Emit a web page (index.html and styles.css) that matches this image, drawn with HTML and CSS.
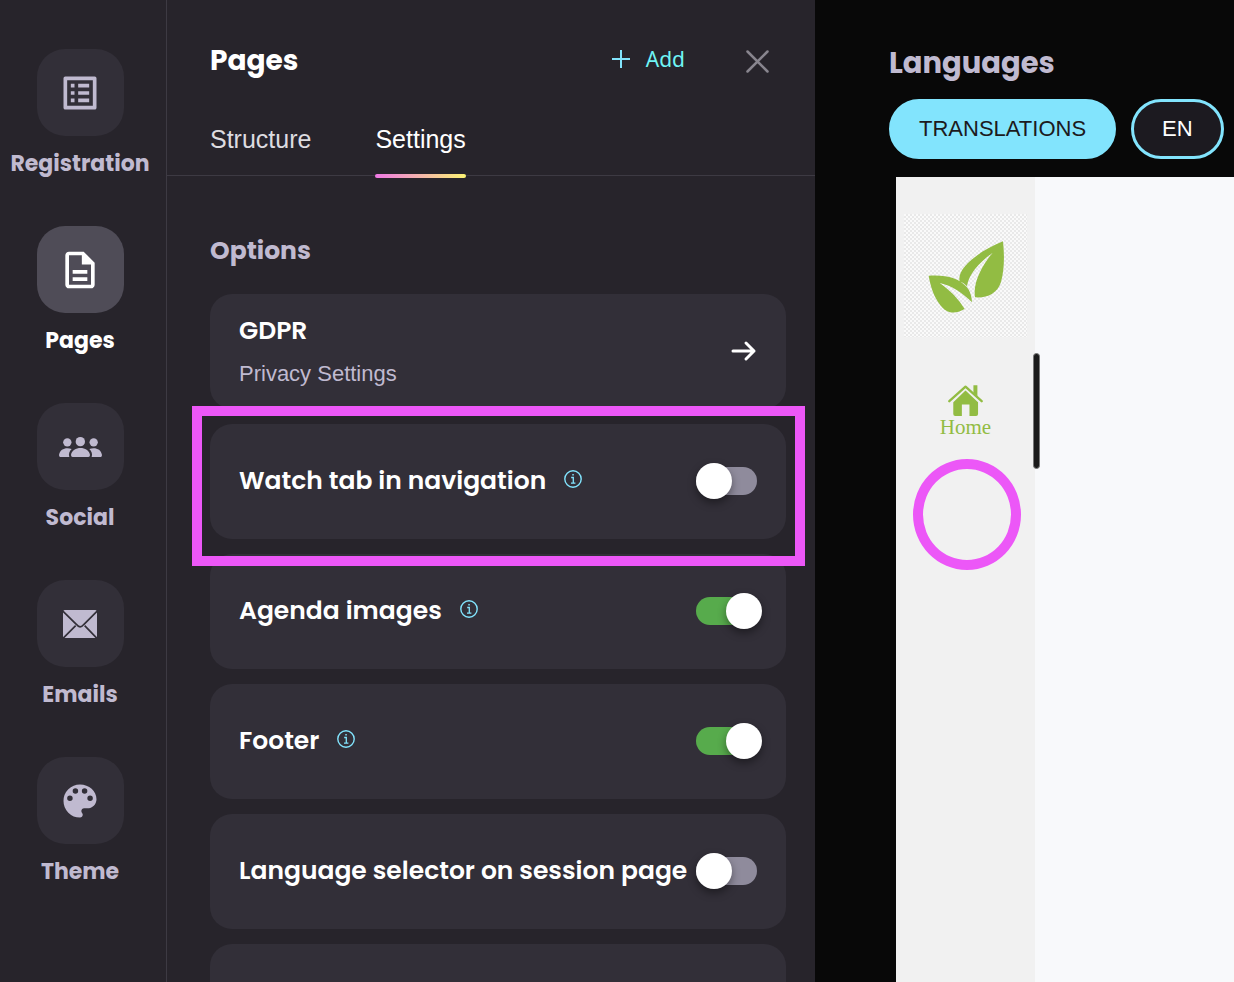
FILE: index.html
```html
<!DOCTYPE html>
<html lang="en">
<head>
<meta charset="utf-8">
<meta name="viewport" content="width=device-width, initial-scale=1">
<title>Pages – Settings</title>
<link rel="stylesheet" href="styles.css">
</head>
<body>
<div class="app">
  <nav class="sidebar" aria-label="Main">
    <a class="nav-item" href="#registration">
      <span class="nav-tile">
        <svg width="44" height="44" viewBox="0 0 24 24" fill="currentColor" aria-hidden="true"><rect x="4" y="4" width="16" height="16" fill="none" stroke="currentColor" stroke-width="2" stroke-linejoin="round"/><path d="M7 7h2v2H7zM7 11h2v2H7zM7 15h2v2H7zM11 7h6v2h-6zM11 11h6v2h-6zM11 15h6v2h-6z"/></svg>
      </span>
      <span class="nav-label">Registration</span>
    </a>
    <a class="nav-item nav-item-active" href="#pages" aria-current="page">
      <span class="nav-tile">
        <svg width="44" height="44" viewBox="0 0 24 24" fill="currentColor" aria-hidden="true"><path fill-rule="evenodd" d="M6 2c-1.1 0-2 .9-2 2v16c0 1.100.9 2 2 2h12c1.100 0 2-.9 2-2V8l-6-6H6zm0 2h7v5h5v11H6V4zM8 12v2h8v-2H8zM8 16v2h8v-2H8z"/></svg>
      </span>
      <span class="nav-label">Pages</span>
    </a>
    <a class="nav-item" href="#social">
      <span class="nav-tile">
        <svg width="45" height="22" viewBox="174 135 135 66" fill="currentColor" aria-hidden="true"><circle cx="241" cy="152" r="14"/><circle cx="202" cy="154" r="12.500"/><circle cx="281" cy="154" r="12.500"/><path d="M213 192C217 164 266 164 270 192q0 6-5 6H218q-5 0-5-6zM177 192C180 172 200 168 215 174C208 181 205 189 208 198H181q-4 0-4-6zM306 192C303 172 283 168 268 174C275 181 278 189 275 198H302q4 0 4-6z"/></svg>
      </span>
      <span class="nav-label">Social</span>
    </a>
    <a class="nav-item" href="#emails">
      <span class="nav-tile">
        <svg width="36" height="30" viewBox="186 654 108 90" aria-hidden="true"><rect x="189" y="657" width="102" height="84" rx="5" fill="currentColor"/><path class="icon-gap" d="M187 659L229 700Q240 715 252 700L293 659M189 742L227 704M291 742L254 704" fill="none" stroke-width="5"/></svg>
      </span>
      <span class="nav-label">Emails</span>
    </a>
    <a class="nav-item" href="#theme">
      <span class="nav-tile">
        <svg width="44" height="44" viewBox="0 0 24 24" fill="currentColor" aria-hidden="true"><path fill-rule="evenodd" d="M12 3a9 9 0 0 0 0 18c.83 0 1.500-.67 1.500-1.500 0-.39-.15-.74-.39-1.010-.23-.26-.38-.61-.38-.99 0-.83.67-1.500 1.500-1.500H16c2.760 0 5-2.240 5-5 0-4.420-4.030-8-9-8zM6.500 12a1.500 1.500 0 1 1 0-3 1.500 1.500 0 0 1 0 3zM9.500 8a1.500 1.500 0 1 1 0-3 1.500 1.500 0 0 1 0 3zM14.500 8a1.500 1.500 0 1 1 0-3 1.500 1.500 0 0 1 0 3zM17.500 12a1.500 1.500 0 1 1 0-3 1.500 1.500 0 0 1 0 3z"/></svg>
      </span>
      <span class="nav-label">Theme</span>
    </a>
  </nav>

  <main class="panel">
    <header class="panel-header">
      <h1 class="panel-title">Pages</h1>
      <button class="add-button" type="button">
        <svg width="18" height="18" viewBox="0 0 18 18" fill="none" stroke="currentColor" stroke-width="2" aria-hidden="true"><path d="M0 9h18M9 0v18"/></svg>
        <span class="add-text">Add</span>
      </button>
      <button class="close-button" type="button" aria-label="Close">
        <svg width="23" height="23" viewBox="0 0 23 23" fill="none" stroke="currentColor" stroke-width="2.500" stroke-linecap="round" aria-hidden="true"><path d="M1.500 1.500l20 20M21.500 1.500l-20 20"/></svg>
      </button>
    </header>
    <div class="tabs">
      <a class="tab" href="#structure">Structure</a>
      <a class="tab tab-active" href="#settings" aria-current="true">Settings</a>
    </div>
    <section class="options">
      <h2 class="options-title">Options</h2>
      <div class="card-list">
        <a class="card card-link" href="#gdpr">
          <span class="card-copy">
            <span class="card-label">GDPR</span>
            <span class="card-note">Privacy Settings</span>
          </span>
          <svg width="26" height="22" viewBox="0 0 26 22" fill="none" stroke="currentColor" stroke-width="3" stroke-linecap="round" stroke-linejoin="round" aria-hidden="true"><path d="M2 11h21M15 3l8 8-8 8"/></svg>
        </a>
        <div class="card card-marked">
          <label class="card-label" for="watch-tab">Watch tab in navigation</label>
          <button class="info" type="button" aria-label="About the watch tab">
            <svg width="18" height="18" viewBox="0 0 18 18" fill="none" stroke="currentColor" aria-hidden="true"><circle cx="9" cy="9" r="8.200" stroke-width="1.400"/><path d="M7.200 7.500H9.300V13M7 13.200h4.400" stroke-width="1.300"/><path d="M8.300 4.700h1.500" stroke-width="1.500"/></svg>
          </button>
          <input class="toggle" id="watch-tab" type="checkbox">
        </div>
        <div class="card">
          <label class="card-label" for="agenda-images">Agenda images</label>
          <button class="info" type="button" aria-label="About agenda images">
            <svg width="18" height="18" viewBox="0 0 18 18" fill="none" stroke="currentColor" aria-hidden="true"><circle cx="9" cy="9" r="8.200" stroke-width="1.400"/><path d="M7.200 7.500H9.300V13M7 13.200h4.400" stroke-width="1.300"/><path d="M8.300 4.700h1.500" stroke-width="1.500"/></svg>
          </button>
          <input class="toggle" id="agenda-images" type="checkbox" checked>
        </div>
        <div class="card">
          <label class="card-label" for="footer">Footer</label>
          <button class="info" type="button" aria-label="About the footer">
            <svg width="18" height="18" viewBox="0 0 18 18" fill="none" stroke="currentColor" aria-hidden="true"><circle cx="9" cy="9" r="8.200" stroke-width="1.400"/><path d="M7.200 7.500H9.300V13M7 13.200h4.400" stroke-width="1.300"/><path d="M8.300 4.700h1.500" stroke-width="1.500"/></svg>
          </button>
          <input class="toggle" id="footer" type="checkbox" checked>
        </div>
        <div class="card">
          <label class="card-label" for="language-selector">Language selector on session page</label>
          <input class="toggle" id="language-selector" type="checkbox">
        </div>
        <div class="card"></div>
      </div>
    </section>
  </main>

  <aside class="preview">
    <h2 class="preview-title">Languages</h2>
    <div class="language-bar">
      <button class="pill pill-filled" type="button">TRANSLATIONS</button>
      <button class="pill" type="button">EN</button>
    </div>
    <div class="site">
      <div class="site-nav">
        <div class="site-logo">
          <svg viewBox="42 131 369 369" fill="currentColor" role="img" aria-label="Leaf logo"><path d="M339 213C280 236 208 285 208 325Q208 330 209 333Q222 337 231 348C236 310 270 275 308 247C277 285 248 335 255 381C290 384 322 370 333 335C344 295 343 250 339 213ZM116 316C170 313 205 322 230 350C242 364 245 380 246 396C220 370 185 345 149 338C180 360 205 385 224 416C190 435 168 427 150 403C132 380 122 350 116 316Z"/></svg>
        </div>
        <a class="site-link" href="#home">
          <svg width="35" height="33" viewBox="172 132 106 98" fill="currentColor" aria-hidden="true"><path d="M176 183L225 139L274 183" fill="none" stroke="currentColor" stroke-width="7" stroke-linecap="round" stroke-linejoin="round"/><path d="M249 135h12v34l-12-11zM188 186L225 151L263 186V222q0 6-6 6H237V193H214V228H194q-6 0-6-6z"/></svg>
          <span>Home</span>
        </a>
      </div>
      <div class="site-page"></div>
    </div>
  </aside>
</div>
</body>
</html>
```
FILE: styles.css
```css
:root {
  --heading: Poppins, Inter, "Open Sans", sans-serif;
  --text: "Liberation Sans", Arial, sans-serif;
  --surface: #27242b;
  --card: #322f38;
  --line: #3d3a43;
  --muted: #c0bad0;
  --cyan: #82e4fd;
  --mark: #ec57f7;
  --leaf: #92bc43;
}

*,
*::before,
*::after {
  box-sizing: border-box;
}

body {
  margin: 0;
  background: #080808;
  color: #fff;
  font-family: var(--text);
}

h1,
h2 {
  margin: 0;
  font-family: var(--heading);
  font-weight: 700;
}

a {
  color: inherit;
  text-decoration: none;
}

button {
  padding: 0;
  border: 0;
  background: none;
  color: inherit;
  font-family: inherit;
  cursor: pointer;
}

svg {
  display: block;
  flex: none;
}

.app {
  display: grid;
  grid-template-columns: 167px minmax(0, 648fr) minmax(0, 419fr);
  height: 100vh;
  overflow: hidden;
}

/* Main navigation */
.sidebar {
  display: flex;
  flex-direction: column;
  align-items: center;
  gap: 48px;
  padding: 49px 6px 0 0;
  border-right: 1px solid var(--line);
  background: var(--surface);
}

.nav-item {
  display: flex;
  flex-direction: column;
  align-items: center;
  gap: 14px;
  color: var(--muted);
}

.nav-tile {
  display: grid;
  place-items: center;
  width: 87px;
  height: 87px;
  border-radius: 28px;
  background: var(--card);
}

.nav-label {
  font: 700 22px/28px var(--heading);
}

.nav-item-active {
  color: #fff;
}

.nav-item-active .nav-tile {
  background: #4f4c57;
}

.icon-gap {
  stroke: var(--card);
}

/* Settings panel */
.panel {
  background: var(--surface);
  overflow: hidden;
}

.panel-header {
  display: flex;
  align-items: center;
  padding: 37px 46px 0 43px;
  height: 85px;
}

.panel-title {
  flex: 1;
  font-size: 28px;
  line-height: 48px;
}

.add-button {
  display: flex;
  align-items: center;
  gap: 16px;
  margin: 0 61px 4px 0;
  color: var(--cyan);
}

.add-text {
  color: #6ff5f5;
  font: 21px/28px "Noto Sans", sans-serif;
}

.close-button {
  color: #88858e;
}

.tabs {
  display: flex;
  gap: 64px;
  padding: 39px 43px 0;
  border-bottom: 1px solid var(--line);
}

.tab {
  position: relative;
  padding-bottom: 21px;
  color: #dddce0;
  font-size: 25px;
  line-height: 30px;
}

.tab-active {
  color: #fff;
}

.tab-active::after {
  content: "";
  position: absolute;
  inset: auto 0 -3px;
  height: 4px;
  border-radius: 2px;
  background: linear-gradient(90deg, #ee78e4, #fbf372);
}

.options {
  padding: 57px 29px 0 43px;
}

.options-title {
  color: var(--muted);
  font-size: 25px;
  line-height: 36px;
}

.card-list {
  display: flex;
  flex-direction: column;
  gap: 15px;
  margin-top: 25px;
}

.card {
  display: flex;
  align-items: center;
  min-height: 115px;
  padding: 0 29px 2px;
  border-radius: 22px;
  background: var(--card);
}

.card-link {
  justify-content: space-between;
}

.card-copy {
  display: grid;
  gap: 11px;
}

.card-label {
  font: 600 25px/36px var(--heading);
  white-space: nowrap;
}

.card-note {
  color: var(--muted);
  font-size: 22px;
  line-height: 28px;
}

.card-marked {
  position: relative;
}

.card-marked::after {
  content: "";
  position: absolute;
  z-index: 1;
  inset: -18px -19px -27px -18px;
  border: 10px solid var(--mark);
  pointer-events: none;
}

.info {
  margin: 0 0 4px 18px;
  color: var(--cyan);
}

.toggle {
  flex: none;
  display: flex;
  align-items: center;
  width: 61px;
  height: 28px;
  margin: 0 0 0 auto;
  border-radius: 14px;
  background: #8f8b9c;
  appearance: none;
  cursor: pointer;
}

.toggle::before {
  content: "";
  flex: none;
  width: 36px;
  height: 36px;
  border-radius: 50%;
  background: #fff;
  box-shadow: 0 4px 9px rgba(0, 0, 0, 0.4);
}

.toggle:checked {
  background: #57ab4c;
}

.toggle:checked::before {
  margin-left: 30px;
}

/* Site preview */
.preview {
  display: flex;
  flex-direction: column;
  padding-top: 39px;
  overflow: hidden;
}

.preview-title {
  padding-left: 74px;
  color: var(--muted);
  font-size: 29px;
  line-height: 48px;
}

.language-bar {
  display: flex;
  gap: 15px;
  padding: 12px 10px 18px 74px;
}

.pill {
  height: 60px;
  padding: 0 28px;
  border: 3px solid var(--cyan);
  border-radius: 30px;
  background: #1c1a20;
  font-size: 22px;
  white-space: nowrap;
}

.pill-filled {
  padding: 0 27px;
  background: var(--cyan);
  color: #1c1a20;
}

.site {
  flex: 1;
  display: flex;
  margin-left: 81px;
  background: #f8f9fb;
}

.site-nav {
  position: relative;
  display: flex;
  flex-direction: column;
  align-items: center;
  gap: 47px;
  width: 139px;
  padding-top: 37px;
  background: #f1f1f1;
  color: var(--leaf);
}

.site-nav::after {
  content: "";
  position: absolute;
  top: 176px;
  right: -5px;
  width: 7px;
  height: 116px;
  border: 1px solid #777;
  border-radius: 4px;
  background: #1a1a1a;
}

.site-logo {
  width: 123px;
  background: repeating-conic-gradient(#e9e9e9 0 25%, #fafafa 0 50%) 0 0 / 4px 4px;
}

.site-link {
  position: relative;
  display: flex;
  flex-direction: column;
  align-items: center;
  font: 21px/20px "Liberation Serif", serif;
}

.site-link::after {
  content: "";
  position: absolute;
  top: 75px;
  left: 50%;
  width: 108px;
  height: 111px;
  margin-left: -52px;
  border: 10px solid var(--mark);
  border-radius: 50%;
}

.site-page {
  flex: 1;
}
```
